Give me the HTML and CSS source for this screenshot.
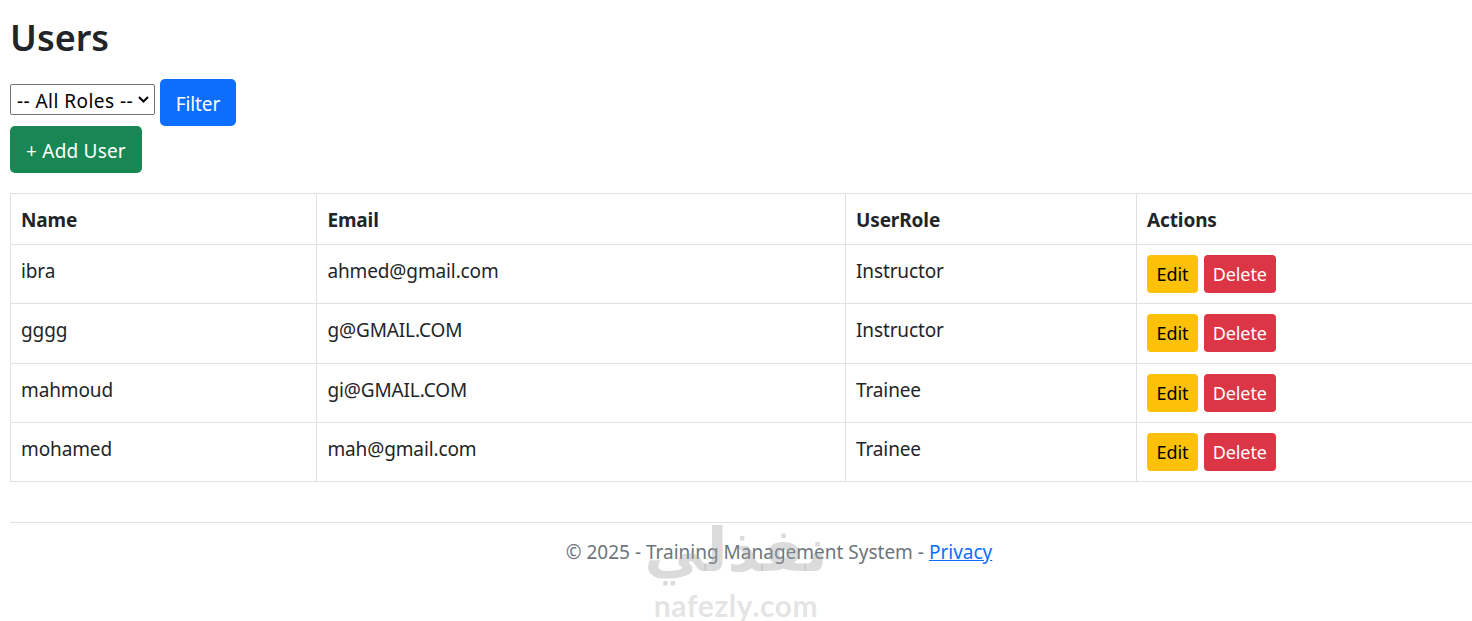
FILE: index.html
```html
<!DOCTYPE html>
<html lang="en">
<head>
<meta charset="utf-8">
<title>Users</title>
<link rel="stylesheet" href="styles.css">
</head>
<body>
<main class="page">
  <h1 class="title">Users</h1>
  <form class="filter">
    <select class="role-select"><option>-- All Roles --</option></select>
    <button type="button" class="btn btn-blue">Filter</button>
  </form>
  <a class="btn btn-green" href="#">+ Add User</a>
  <table class="users">
    <colgroup><col class="c1"><col class="c2"><col class="c3"><col class="c4"></colgroup>
    <thead>
      <tr><th>Name</th><th>Email</th><th>UserRole</th><th>Actions</th></tr>
    </thead>
    <tbody>
      <tr><td>ibra</td><td>ahmed@gmail.com</td><td>Instructor</td><td><a class="btn-sm btn-yellow" href="#">Edit</a> <a class="btn-sm btn-red" href="#">Delete</a></td></tr>
      <tr><td>gggg</td><td>g@GMAIL.COM</td><td>Instructor</td><td><a class="btn-sm btn-yellow" href="#">Edit</a> <a class="btn-sm btn-red" href="#">Delete</a></td></tr>
      <tr><td>mahmoud</td><td>gi@GMAIL.COM</td><td>Trainee</td><td><a class="btn-sm btn-yellow" href="#">Edit</a> <a class="btn-sm btn-red" href="#">Delete</a></td></tr>
      <tr><td>mohamed</td><td>mah@gmail.com</td><td>Trainee</td><td><a class="btn-sm btn-yellow" href="#">Edit</a> <a class="btn-sm btn-red" href="#">Delete</a></td></tr>
    </tbody>
  </table>
  <footer class="foot">© 2025 - Training Management System - <a href="#">Privacy</a></footer>
</main>
<div class="mark" aria-hidden="true">
  <div class="mark-ar">نفذلي</div>
  <div class="mark-en">nafezly.com</div>
</div>
</body>
</html>
```
FILE: styles.css
```css
html, body { margin: 0; padding: 0; overflow: hidden; height: 100%; background: #fff; }
body { font-family: "Noto Sans", "Open Sans", sans-serif; color: #212529; font-size: 19px; line-height: 30px; position: relative; }
.page { width: 1538px; margin-left: 10px; }
.title { margin: 0; padding-top: 14px; height: 79px; box-sizing: border-box; font-size: 36px; line-height: 48px; font-weight: 600; }
.filter { display: flex; align-items: flex-start; gap: 5px; height: 47px; }
.role-select { appearance: none; box-sizing: border-box; width: 145px; height: 31px; margin: 5px 0 0; padding: 4px 0 0 6px; font: inherit; font-size: 19px; line-height: 25px; color: #000; border: 1px solid #767676; border-radius: 2px; letter-spacing: 0.45px; background: #fff url("data:image/svg+xml,%3Csvg xmlns='http://www.w3.org/2000/svg' width='11' height='7' viewBox='0 0 11 7'%3E%3Cpath d='M1 1l4.5 4.5L10 1' fill='none' stroke='%23000' stroke-width='2'/%3E%3C/svg%3E") no-repeat 127px 11px; }
.btn { display: inline-block; box-sizing: border-box; height: 47px; border: 1px solid transparent; border-radius: 5px; color: #fff; font: inherit; text-decoration: none; letter-spacing: -0.1px; }
.btn-blue { background: #0d6efd; width: 76px; text-align: center; padding: 9px 0 7px; }
.btn-green { background: #198754; width: 132px; text-align: center; padding: 9px 0 7px; letter-spacing: 0.2px; }
.users { display: table; table-layout: fixed; border-collapse: collapse; width: 1538px; margin-top: 20px; }
.c1 { width: 306.4px; } .c2 { width: 528.6px; } .c3 { width: 291px; } .c4 { width: 412px; }
.users th, .users td { border: 1px solid #dee2e6; padding: 10px; text-align: left; vertical-align: top; letter-spacing: -0.12px; }
.users th { font-weight: 700; font-size: 19px; height: 30px; padding-top: 11px; padding-bottom: 9px; }
.users tbody td { height: 38.25px; line-height: 32px; }
.users td:last-child { line-height: 0; }
.btn-sm { display: inline-block; box-sizing: border-box; height: 38px; line-height: 38px; font-size: 18px; border-radius: 4px; text-decoration: none; letter-spacing: -0.1px; vertical-align: top; }
.btn-yellow { background: #ffc107; color: #000; width: 51px; text-align: center; }
.btn-red { background: #dc3545; color: #fff; width: 72px; text-align: center; margin-left: 1px; }
.foot { margin-top: 40px; border-top: 1px solid #dee2e6; padding-top: 14px; text-align: center; color: #6c757d; letter-spacing: 0; }
.foot a { color: #0d6efd; }
.mark { position: absolute; left: 636px; top: 520px; width: 200px; text-align: center; color: rgba(160, 160, 160, 0.38); pointer-events: none; }
.mark-ar { font-family: "DejaVu Sans", sans-serif; font-weight: 700; font-size: 60px; line-height: 60px; height: 60px; }
.mark-en { font-family: "Lato", sans-serif; font-weight: 700; font-size: 30px; line-height: 32px; margin-top: 9px; letter-spacing: 0.6px; color: rgba(160, 160, 160, 0.3); }
```
